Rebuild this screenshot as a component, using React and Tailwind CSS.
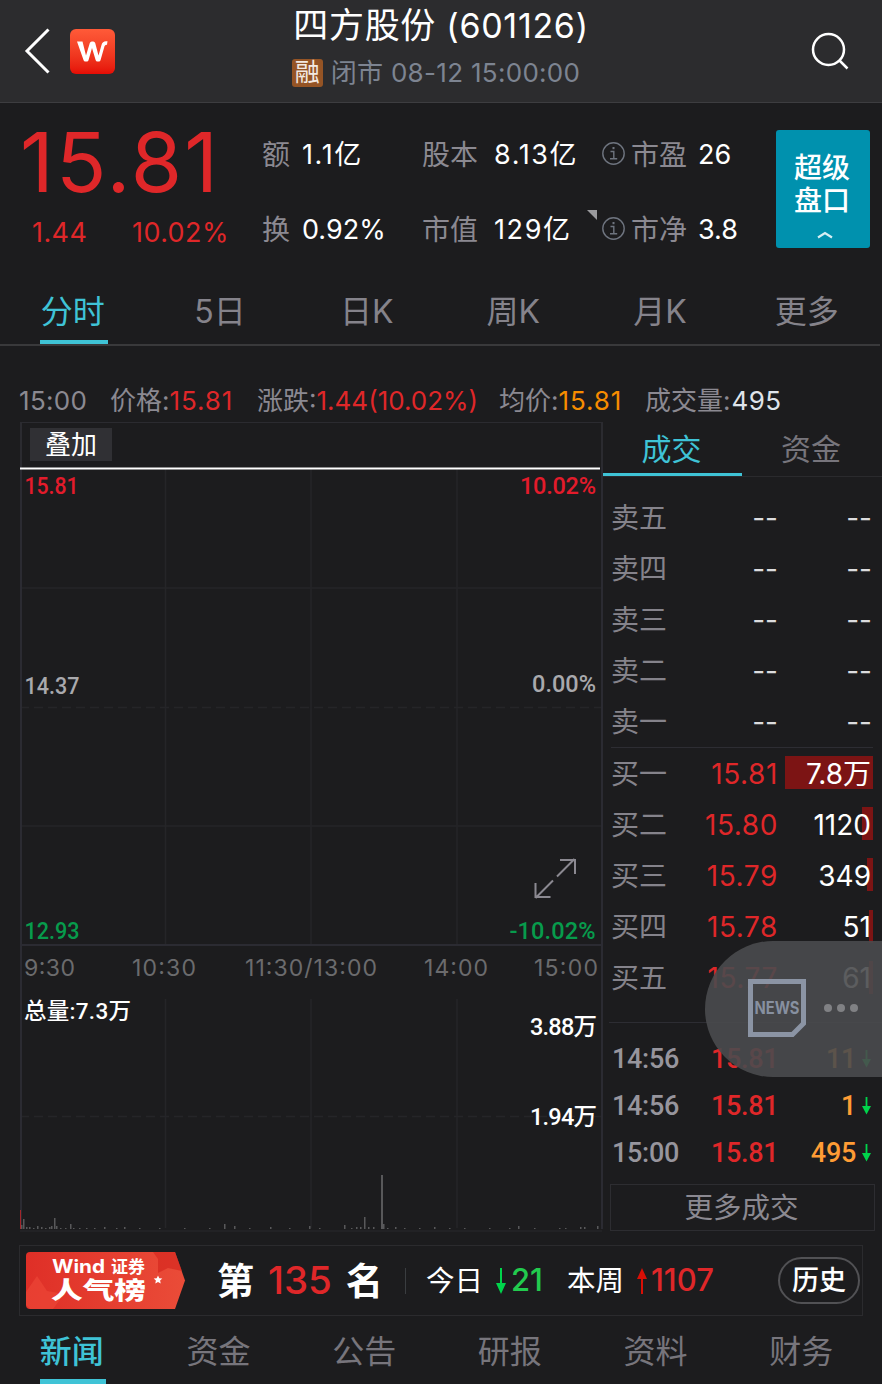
import clsx from "clsx";

const periodTabs = ["分时", "5日", "日K", "周K", "月K", "更多"];
const infoTabs = ["新闻", "资金", "公告", "研报", "资料", "财务"];

const orders = [
  { label: "卖五", price: "--", volume: "--" },
  { label: "卖四", price: "--", volume: "--" },
  { label: "卖三", price: "--", volume: "--" },
  { label: "卖二", price: "--", volume: "--" },
  { label: "卖一", price: "--", volume: "--" },
  { label: "买一", price: "15.81", volume: "7.8万", bar: 88 },
  { label: "买二", price: "15.80", volume: "1120", bar: 11 },
  { label: "买三", price: "15.79", volume: "349", bar: 6 },
  { label: "买四", price: "15.78", volume: "51", bar: 4 },
  { label: "买五", price: "15.77", volume: "61", bar: 4 },
];

const trades = [
  { time: "14:56", price: "15.81", volume: "11" },
  { time: "14:56", price: "15.81", volume: "1" },
  { time: "15:00", price: "15.81", volume: "495" },
];

// [x, height] of every visible volume bar
const volumeBars = [
  [2, 4], [4, 10], [7, 2], [10, 2], [14, 1], [18, 3], [22, 2], [26, 1], [30, 2],
  [32, 3], [35, 11], [37, 3], [41, 1], [46, 1], [51, 5], [54, 1], [60, 1], [67, 1],
  [75, 1], [85, 2], [97, 1], [105, 2], [120, 1], [140, 1], [165, 1], [190, 1],
  [205, 5], [215, 3], [230, 1], [251, 2], [270, 1], [290, 3], [300, 1], [325, 4],
  [332, 1], [337, 2], [341, 2], [345, 12], [349, 2], [354, 2], [362, 54], [364, 5],
  [368, 1], [376, 2], [385, 1], [400, 1], [415, 2], [430, 1], [445, 1], [470, 1],
  [490, 1], [499, 3], [515, 1], [540, 1], [546, 1], [561, 2], [565, 2], [578, 3],
];

function Header() {
  return (
    <header className="flex h-[103px] items-center justify-between border-b border-[#3d3d40] bg-[#2c2c2e]">
      <div className="flex w-[200px] items-center pl-[24px]">
        <svg width="26" height="46" viewBox="0 0 26 46" fill="none" stroke="#fff" strokeWidth="3">
          <path d="M24.500 1.500 3 23l21.500 21.500" />
        </svg>
        <div className="ml-[20px] flex h-[45px] w-[45px] items-center justify-center rounded-[6px] bg-gradient-to-b from-[#ff5a38] to-[#e50b05]">
          <svg width="31" height="21" viewBox="0 0 31 21" fill="#fff">
            <path d="M0 .500h5.500L9 14.500 12.800 2q.5-1.500 2-1.500h1.400q1.500 0 2 1.500L21.500 14.500l3-10.500Q25.500 .300 29 .300h1.500l-.5 3.400q-2-.2-2.500 1.500l-4 14q-.4 1.300-1.600 1.300h-1.600q-1.200 0-1.600-1.300L15 7l-3.500 12.200q-.4 1.300-1.600 1.300H8.200q-1.200 0-1.600-1.300z" />
          </svg>
        </div>
      </div>
      <div className="flex flex-col items-center">
        <h1 className="-mt-[8px] text-[34px] leading-[50px] tracking-[0.7px] whitespace-nowrap text-white">
          <span className="text-[35px]">四方股份</span> (601126)
        </h1>
        <div className="-ml-[10px] flex h-[44px] items-center gap-[8px]">
          <span className="flex h-[28px] w-[31px] items-center justify-center rounded-[3px] bg-[#955425] text-[25px] leading-none text-[#f2e9e2]">
            融
          </span>
          <span className="text-[26px] leading-none tracking-[0.3px] text-[#7d8491]">闭市 08-12 15:00:00</span>
        </div>
      </div>
      <div className="flex w-[200px] justify-end pr-[33px]">
        <svg width="38" height="38" viewBox="0 0 38 38" fill="none" stroke="#fff" strokeWidth="2.500">
          <circle cx="17.500" cy="17.500" r="15.500" />
          <path d="m28 28 8.500 8.500" />
        </svg>
      </div>
    </header>
  );
}

function InfoIcon() {
  return (
    <svg className="mr-[6px] -mt-[3px] shrink-0" width="23" height="23" viewBox="0 0 23 23" fill="none" stroke="#6e747f" strokeWidth="1.400">
      <circle cx="11.500" cy="11.500" r="10.700" />
      <path d="M8.500 9.500h3.300v7M8 16.800h7.200" />
      <path d="M11.500 5v2.200" strokeWidth="2" />
    </svg>
  );
}

function Stat({ label, value, labelWidth, info, wide }) {
  return (
    <div className="flex items-center text-[28px] leading-[40px]">
      {info && <InfoIcon />}
      <span className={clsx("shrink-0 text-[#8b8991]", labelWidth)}>{label}</span>
      <span className={clsx("text-[27px] whitespace-nowrap text-white", wide && "tracking-[1.6px]")}>{value}</span>
    </div>
  );
}

function Quote() {
  return (
    <section className="flex h-[177px]">
      <div className="w-[262px] text-[#df2729]">
        <div className="mt-[17px] pl-[20px] text-[83px] leading-[84px] tracking-[2.200px]">15.81</div>
        <div className="mt-[11px] flex pl-[32px] text-[27px] leading-[36px] tracking-[0.4px]">
          <span className="w-[100px]">1.44</span>
          <span>10.02%</span>
        </div>
      </div>
      <div className="grid h-[150px] w-[514px] grid-cols-[160px_180px_174px] grid-rows-[75px_75px] items-center pt-[14px]">
        <Stat label="额" value="1.1亿" labelWidth="w-[40px]" wide />
        <Stat label="股本" value="8.13亿" labelWidth="w-[72px]" wide />
        <Stat label="市盈" value="26" labelWidth="w-[67px]" info />
        <Stat label="换" value="0.92%" labelWidth="w-[40px]" />
        <div className="relative">
          <Stat label="市值" value="129亿" labelWidth="w-[72px]" wide />
          <i className="absolute top-0 right-[5px] border-t-[10px] border-l-[10px] border-t-[#9a9a9d] border-l-transparent" />
        </div>
        <Stat label="市净" value="3.8" labelWidth="w-[67px]" info />
      </div>
      <button className="mt-[27px] flex h-[118px] w-[94px] flex-col items-center rounded-[3px] bg-[#0091ae] pt-[22px] text-[28px] leading-[33px] font-medium text-white">
        <span className="-ml-[2px]">超级</span>
        <span className="-ml-[2px]">盘口</span>
        <svg className="mt-[13px] ml-[3px]" width="16" height="8" viewBox="0 0 16 8" fill="none" stroke="#d5eef3" strokeWidth="2.200">
          <path d="M1 6.500 8 2l7 4.500" />
        </svg>
      </button>
    </section>
  );
}

function PeriodTabs() {
  return (
    <nav className="grid h-[66px] w-[880px] grid-cols-6 border-b-2 border-[#39393b] text-[32px] leading-[64px] text-[#85838b]">
      {periodTabs.map((tab, i) => (
        <div key={tab} className="flex justify-center">
          <span className={clsx("h-[64px]", i === 0 && "ml-[1px] w-[68px] border-b-4 border-[#3fc3d6] pr-[2px] text-center text-[#3fc3d6]")}>
            {tab}
          </span>
        </div>
      ))}
    </nav>
  );
}

function PriceLine() {
  return (
    <div className="flex h-[76px] items-center pt-[33px] pl-[19px] text-[26px] whitespace-nowrap text-[#8b8991]">
      <span className="w-[91px] tracking-[0.3px]">15:00</span>
      <span className="w-[147px]">价格:<b className="font-normal tracking-[0.9px] text-[#df2729]">15.81</b></span>
      <span className="w-[242px]">涨跌:<b className="font-normal text-[#df2729]">1.44(10.02%)</b></span>
      <span className="w-[146px]">均价:<b className="font-normal tracking-[0.9px] text-[#f78c00]">15.81</b></span>
      <span>成交量:<b className="ml-[1px] font-normal tracking-[0.4px] text-[#dfe4ea]">495</b></span>
    </div>
  );
}

function Chart() {
  return (
    <div className="w-[583px]">
      <div className="flex h-[45px] border-x-2 border-t border-[#2b2b30] pt-[5px] pl-[8px]">
        <button className="h-[33px] w-[82px] bg-[#303034] text-[26px] leading-[32px] text-white">叠加</button>
      </div>
      <svg
        className="block [font-family:Roboto,'Noto_Sans_CJK_SC',sans-serif]"
        width="583"
        height="765"
        viewBox="0 0 583 765"
      >
        <g stroke="#252528" strokeWidth="1.500">
          <path d="M145.500 2v476M291 2v476M437 2v476M145.500 532v229M291 532v229M437 532v229M0 121h582M0 359h582M0 764h582" />
          <path d="M0 240.500h582M0 649.500h582" strokeDasharray="9 5" />
        </g>
        <path d="M1 0v762M582 0v762M0 478h583" stroke="#2b2b32" strokeWidth="2" />
        <path d="M0 1.500h580" stroke="#fff" strokeWidth="2" />
        <g fill="#58585a">
          {volumeBars.map(([x, h]) => (
            <rect key={x} x={x - 1} y={762 - h} width={h > 20 ? 2 : 1.5} height={h} />
          ))}
        </g>
        <path d="M0 743v19" stroke="#a3262b" strokeWidth="2" />

        <g fontSize="23.500" fontWeight="500">
          <text x="4.500" y="27" fill="#e31b2b" textLength="54" lengthAdjust="spacingAndGlyphs">15.81</text>
          <text x="500" y="27" fill="#e31b2b" textLength="76">10.02%</text>
          <text x="4.500" y="472" fill="#079b4c" textLength="55" lengthAdjust="spacingAndGlyphs">12.93</text>
          <text x="489.500" y="472" fill="#079b4c" textLength="86">-10.02%</text>
          <g fill="#a9a9ad">
            <text x="4.500" y="227" textLength="55" lengthAdjust="spacingAndGlyphs">14.37</text>
            <text x="512" y="224.500" textLength="64">0.00%</text>
          </g>
          <g fill="#fff">
            <text x="4" y="552" textLength="107" fontSize="22.500">总量:7.3万</text>
            <text x="510" y="568" textLength="67">3.88万</text>
            <text x="510" y="658" textLength="67">1.94万</text>
          </g>
        </g>
        <g className="[font-family:Inter]" fontSize="23" fill="#6b6b6d">
          <text x="4" y="509" textLength="51">9:30</text>
          <text x="112" y="509" textLength="64">10:30</text>
          <text x="225" y="509" textLength="132">11:30/13:00</text>
          <text x="404" y="509" textLength="64">14:00</text>
          <text x="514" y="509" textLength="64">15:00</text>
        </g>

        <g fill="none" stroke="#8b8991" strokeWidth="2">
          <path d="M537 409.500 554.500 392M540 393h15v14" />
          <path d="M533 413.500 515.500 431M515.500 416v14h15" />
        </g>
      </svg>
    </div>
  );
}

function DownArrow() {
  return (
    <svg width="9" height="18" viewBox="0 0 9 18" fill="#00d44b">
      <path d="M3.600 0h1.800v9H9l-4.500 8.500L0 9h3.600z" />
    </svg>
  );
}

function FloatingNews() {
  return (
    <div className="absolute top-[519px] right-0 flex h-[136px] w-[177px] items-center rounded-l-[68px] bg-[#4a4b4e]/90 pl-[43px]">
      <svg className="-mt-[2px] overflow-visible" width="58" height="58" viewBox="0 0 58 58">
        <path d="M2.500 2.500h53v42L44.500 55.500h-42z" fill="none" stroke="#8b94a4" strokeWidth="5" />
        <text x="6.500" y="35" textLength="45" lengthAdjust="spacingAndGlyphs" fontSize="17" fontWeight="700" fill="#8790a0">
          NEWS
        </text>
      </svg>
      <div className="-mt-[2px] ml-[18px] flex gap-[5px]">
        <i className="h-[8px] w-[8px] rounded-full bg-[#808184]" />
        <i className="h-[8px] w-[8px] rounded-full bg-[#808184]" />
        <i className="h-[8px] w-[8px] rounded-full bg-[#808184]" />
      </div>
    </div>
  );
}

function OrderBook() {
  return (
    <div className="relative w-[279px]">
      <div className="grid h-[55px] grid-cols-[139px_138px] border-b border-[#2a2a2d] text-center text-[30px] leading-[54px] text-[#77757c]">
        <span className="h-[54px] border-b-[3px] border-[#3fc3d6] pr-[2px] text-[#3fc3d6]">成交</span>
        <span>资金</span>
      </div>

      <div className="pt-[15px] pr-[9px] pl-[8px] text-[28px]">
        {orders.map((o, i) => (
          <div
            key={o.label}
            className={clsx("relative flex h-[51.200px] items-center", i === 5 && "shadow-[0_-1px_0_#2d2d33]")}
          >
            {o.bar && (
              <i className="absolute top-[8px] right-0 h-[33px] bg-[#7c1414]" style={{ width: o.bar }} />
            )}
            <span className="w-[60px] text-[#85838b]">{o.label}</span>
            <span className={clsx("relative w-[107px] text-right", i < 5 ? "text-[#dcdcde]" : "tracking-[0.6px] text-[#df2729]")}>
              {o.price}
            </span>
            <span className={clsx("relative flex-1 text-right", i < 5 ? "pr-[1px] text-[#dcdcde]" : "pr-[2px] text-white")}>
              {o.volume}
            </span>
          </div>
        ))}
      </div>

      <div className="mt-[18px] ml-[6px] border-t border-[#2d2d33] pt-[13px] pr-[11px] pl-[3px] text-[27px] font-medium tracking-[-0.3px] [font-family:Roboto]">
        {trades.map((t, i) => (
          <div key={i} className="flex h-[47px] items-center">
            <span className="w-[99px] text-[#97959d]">{t.time}</span>
            <span className="w-[66px] text-[#df2729]">{t.price}</span>
            <span className="flex-1 pr-[6px] text-right text-[#ff9c35]">{t.volume}</span>
            <DownArrow />
          </div>
        ))}
      </div>
      <button className="mt-[7px] ml-[7px] h-[47px] w-[265px] border border-[#2d2d31] pr-[2px] text-[28.500px] leading-[45px] text-[#8b8991]">
        更多成交
      </button>
      <FloatingNews />
    </div>
  );
}

function RankBadge() {
  return (
    <svg width="160" height="57" viewBox="0 0 160 57">
      <defs>
        <linearGradient id="badge" x1="0" x2="1">
          <stop offset="0" stopColor="#df2f27" />
          <stop offset="1" stopColor="#ea4c38" />
        </linearGradient>
      </defs>
      <path d="M4 0h145l10 28.500L149 57H4q-4 0-4-4V4q0-4 4-4z" fill="url(#badge)" />
      <path d="m11 24 10 15 17 3-11 15H4l-4-4V40z" fill="#ef4a38" opacity=".6" />
      <path d="M127 0h22l7 19-14-3-10 5V7z" fill="#d5281f" opacity=".7" />
      <g fill="#fff" fontWeight="700">
        <text x="26" y="21" fontSize="18.500" textLength="53" lengthAdjust="spacingAndGlyphs">Wind</text>
        <text x="85" y="20.500" fontSize="17" textLength="34">证券</text>
        <text x="25" y="47" fontSize="24" fontWeight="900" textLength="95" lengthAdjust="spacingAndGlyphs">人气榜</text>
      </g>
      <path d="m132 23.500 1.300 2.800 3 .3-2.200 2 .6 3-2.700-1.600-2.700 1.600.6-3-2.200-2 3-.3z" fill="#fff" />
    </svg>
  );
}

function RankBar() {
  return (
    <section className="mt-[13px] ml-[19px] flex h-[71px] w-[844px] items-center border border-[#2b2b2e] pl-[6px] whitespace-nowrap text-white">
      <RankBadge />
      <span className="mt-[2px] ml-[31px] text-[37px] font-bold">第</span>
      <span className="mt-[1px] ml-[14px] w-[64px] text-[38.500px] font-medium text-[#df2729]">135</span>
      <span className="mt-[2px] ml-[14px] text-[37px] font-bold">名</span>
      <i className="ml-[22px] h-[26px] w-px bg-[#3a3d40]" />
      <span className="mt-[2px] ml-[20px] w-[70px] text-[28.500px]">今日</span>
      <svg width="10" height="26" viewBox="0 0 10 26" fill="#00d44b">
        <path d="M4 0h2v15h4L5 26 0 15h4z" />
      </svg>
      <span className="ml-[5px] w-[56px] text-[31px] font-medium text-[#22cb4e]">21</span>
      <span className="mt-[2px] w-[70px] text-[28.500px]">本周</span>
      <svg width="10" height="26" viewBox="0 0 10 26" fill="#d80f06">
        <path d="M4 26h2V11h4L5 0 0 11h4z" />
      </svg>
      <span className="ml-[4px] text-[31px] font-medium text-[#df2729]">1107</span>
      <button className="mr-[2px] ml-auto h-[47px] w-[82px] rounded-full border-2 border-[#515154] text-[27px] leading-[44px] font-medium">
        历史
      </button>
    </section>
  );
}

function InfoTabs() {
  return (
    <nav className="grid h-[68px] w-[874px] grid-cols-6 text-[32px] leading-[72px] text-[#77757c]">
      {infoTabs.map((tab, i) => (
        <div key={tab} className="flex justify-center">
          <span
            className={clsx("h-[68px]", i === 0 && "w-[66px] border-b-[5px] border-[#3fc3d6] pr-[2px] text-center font-medium text-[#3fc3d6]")}
          >
            {tab}
          </span>
        </div>
      ))}
    </nav>
  );
}

export default function App() {
  return (
    <div className="h-[1384px] w-[882px] overflow-hidden bg-[#1c1c1e] [font-family:Inter,'Noto_Sans_CJK_SC',sans-serif]">
      <Header />
      <Quote />
      <PeriodTabs />
      <PriceLine />
      <main className="flex h-[810px] pl-[20px]">
        <Chart />
        <OrderBook />
      </main>
      <RankBar />
      <InfoTabs />
    </div>
  );
}
